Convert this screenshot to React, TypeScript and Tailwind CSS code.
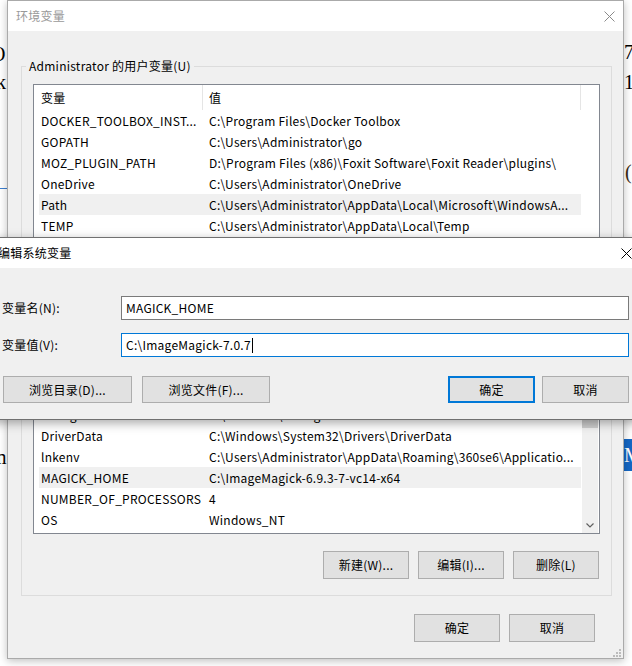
import React from 'react';

type Row = { name: string; value: string; hot?: boolean };

// rows 6..13 sit under the edit dialog, so they stay blank
const rows: Row[] = [
  { name: 'DOCKER_TOOLBOX_INST...', value: 'C:\\Program Files\\Docker Toolbox' },
  { name: 'GOPATH', value: 'C:\\Users\\Administrator\\go' },
  { name: 'MOZ_PLUGIN_PATH', value: 'D:\\Program Files (x86)\\Foxit Software\\Foxit Reader\\plugins\\' },
  { name: 'OneDrive', value: 'C:\\Users\\Administrator\\OneDrive' },
  { name: 'Path', value: 'C:\\Users\\Administrator\\AppData\\Local\\Microsoft\\WindowsA...', hot: true },
  { name: 'TEMP', value: 'C:\\Users\\Administrator\\AppData\\Local\\Temp' },
  { name: '', value: '' },
  { name: '', value: '' },
  { name: '', value: '' },
  { name: '', value: '' },
  { name: '', value: '' },
  { name: '', value: '' },
  { name: '', value: '' },
  { name: '', value: '' },
  { name: 'configsetroot', value: 'C:\\Windows\\ConfigSetRoot' },
  { name: 'DriverData', value: 'C:\\Windows\\System32\\Drivers\\DriverData' },
  { name: 'lnkenv', value: 'C:\\Users\\Administrator\\AppData\\Roaming\\360se6\\Applicatio...' },
  { name: 'MAGICK_HOME', value: 'C:\\ImageMagick-6.9.3-7-vc14-x64', hot: true },
  { name: 'NUMBER_OF_PROCESSORS', value: '4' },
  { name: 'OS', value: 'Windows_NT' },
];

const CloseX = ({ color }: { color: string }) => (
  <svg width="11" height="11" viewBox="0 0 11 11">
    <path d="M0.5 0.5 L10.5 10.5 M10.5 0.5 L0.5 10.5" stroke={color} strokeWidth="1" fill="none" />
  </svg>
);

const Btn = ({ children, className }: { children: React.ReactNode; className: string }) => (
  <button className={`border border-[#adadad] bg-[#e1e1e1] text-[12px] leading-[16px] text-black ${className}`}>
    {children}
  </button>
);

export default function App() {
  return (
    <div className="relative w-[632px] h-[666px] overflow-hidden bg-white text-[12px] leading-[16px] tracking-[0.25px] text-black font-['Microsoft_YaHei_UI','Noto_Sans_CJK_SC',sans-serif]">
      {/* page behind the windows */}
      <span className="absolute left-[-9px] top-[42px] font-['Liberation_Serif',serif] text-[20px] leading-[24px]">O</span>
      <span className="absolute left-[-4px] top-[70px] font-['Liberation_Serif',serif] text-[20px] leading-[24px]">k</span>
      <div className="absolute left-0 top-[188px] w-[7px] h-[1px] bg-[#3c7fd0]" />
      <span className="absolute left-[-9px] top-[445px] font-['Liberation_Serif',serif] text-[20px] leading-[24px]">m</span>
      <span className="absolute left-[624px] top-[40px] font-['Liberation_Serif',serif] text-[20px] leading-[24px]">7</span>
      <span className="absolute left-[624px] top-[70px] font-['Liberation_Serif',serif] text-[20px] leading-[24px]">1</span>
      <span className="absolute left-[625px] top-[160px] font-['Liberation_Serif',serif] text-[20px] leading-[24px] text-[#3a2a10]">(i</span>
      <div className="absolute left-[623px] top-[439px] w-[12px] h-[32px] bg-[#1467c4] overflow-hidden">
        <span className="block pl-[1px] pt-[4px] font-['Liberation_Serif',serif] text-[20px] leading-[24px] text-white">M</span>
      </div>

      {/* 环境变量 */}
      <div className="absolute left-[7px] top-0 w-[617px] h-[659px] border border-[#aaaaaa] bg-[#f0f0f0] flex flex-col shadow-[0_2px_8px_rgba(0,0,0,0.25)]">
        <div className="h-[30px] bg-white flex items-center justify-between pl-[8px] pr-[8px]">
          <span className="text-[#999999]">环境变量</span>
          <CloseX color="#8a8a8a" />
        </div>
        <div className="relative flex-1 flex flex-col pt-[27px] pl-[13px]">
          <fieldset className="w-[591px] border border-[#dcdcdc] px-[4px] pb-[16px]">
            <legend className="px-[3px] leading-[16px]">Administrator 的用户变量(U)</legend>
            <div className="mx-[7px] mt-[10px] h-[450px] border border-[#828790] bg-white flex">
              <div className="w-[547px] flex flex-col">
                <div className="h-[25px] flex shrink-0">
                  <div className="w-[169px] border-r border-[#e5e5e5] pl-[7px] flex items-center">变量</div>
                  <div className="w-[378px] border-r border-[#e5e5e5] pl-[6px] flex items-center">值</div>
                </div>
                {rows.map((r, i) => (
                  <div
                    key={i}
                    className={`ml-[5px] h-[21px] shrink-0 flex items-center ${r.hot ? 'bg-[#f0f0f0]' : ''}`}
                  >
                    <div className="w-[163px] pl-[2px] overflow-hidden whitespace-nowrap">{r.name}</div>
                    <div className="flex-1 pl-[7px] overflow-hidden whitespace-nowrap">{r.value}</div>
                  </div>
                ))}
              </div>
              <div className="w-[18px] flex flex-col">
                <div className="h-[335px]" />
                <div className="ml-[1px] w-[16px] flex-1 bg-[#f0f0f0] flex flex-col">
                  <div className="h-[8px] bg-[#cdcdcd]" />
                  <div className="flex-1" />
                  <div className="h-[16px] flex items-center justify-center">
                    <svg width="8" height="5" viewBox="0 0 8 5">
                      <path d="M0.5 0.5 L4 4 L7.5 0.5" stroke="#606060" strokeWidth="1.2" fill="none" />
                    </svg>
                  </div>
                </div>
              </div>
            </div>
            <div className="mt-[17px] mr-[8px] flex justify-end gap-[9px]">
              <Btn className="w-[86px] h-[28px]">新建(W)...</Btn>
              <Btn className="w-[86px] h-[28px]">编辑(I)...</Btn>
              <Btn className="w-[86px] h-[28px]">删除(L)</Btn>
            </div>
          </fieldset>
          <div className="mt-[18px] pr-[28px] flex justify-end gap-[9px]">
            <Btn className="w-[86px] h-[28px]">确定</Btn>
            <Btn className="w-[86px] h-[28px]">取消</Btn>
          </div>
          <svg className="absolute right-[2px] bottom-[1px]" width="9" height="9" viewBox="0 0 9 9">
            <rect x="7" y="1" width="2" height="2" fill="#bcbcbc" />
            <rect x="4" y="4" width="2" height="2" fill="#bcbcbc" />
            <rect x="7" y="4" width="2" height="2" fill="#bcbcbc" />
            <rect x="1" y="7" width="2" height="2" fill="#bcbcbc" />
            <rect x="4" y="7" width="2" height="2" fill="#bcbcbc" />
            <rect x="7" y="7" width="2" height="2" fill="#bcbcbc" />
          </svg>
        </div>
      </div>

      {/* 编辑系统变量 */}
      <div className="absolute left-[-12px] top-[237px] w-[652px] h-[183px] border border-[#707070] bg-[#f0f0f0] flex flex-col shadow-[0_3px_10px_rgba(0,0,0,0.35)]">
        <div className="h-[30px] bg-white flex items-center justify-between pl-[9px] pr-[7px]">
          <span>编辑系统变量</span>
          <CloseX color="#000000" />
        </div>
        <div className="flex-1 flex flex-col pt-[28px] pl-[13px] pr-[10px]">
          <div className="flex items-center">
            <div className="w-[119px]">变量名(N):</div>
            <div className="w-[508px] h-[24px] border border-[#7a7a7a] bg-white pl-[4px] flex items-center">MAGICK_HOME</div>
          </div>
          <div className="mt-[13px] flex items-center">
            <div className="w-[119px]">变量值(V):</div>
            <div className="w-[508px] h-[24px] border border-[#0078d7] bg-white pl-[4px] flex items-center">
              C:\ImageMagick-7.0.7
              <span className="inline-block ml-[1px] w-[1px] h-[15px] bg-black" />
            </div>
          </div>
          <div className="mt-[19px] ml-[1px] flex items-center">
            <Btn className="w-[129px] h-[27px]">浏览目录(D)...</Btn>
            <Btn className="ml-[10px] w-[128px] h-[27px]">浏览文件(F)...</Btn>
            <div className="flex-1" />
            <button className="w-[87px] h-[27px] border-2 border-[#0078d7] bg-[#e1e1e1] text-[12px] leading-[16px] text-black">确定</button>
            <Btn className="ml-[7px] w-[87px] h-[27px]">取消</Btn>
          </div>
        </div>
      </div>
    </div>
  );
}
